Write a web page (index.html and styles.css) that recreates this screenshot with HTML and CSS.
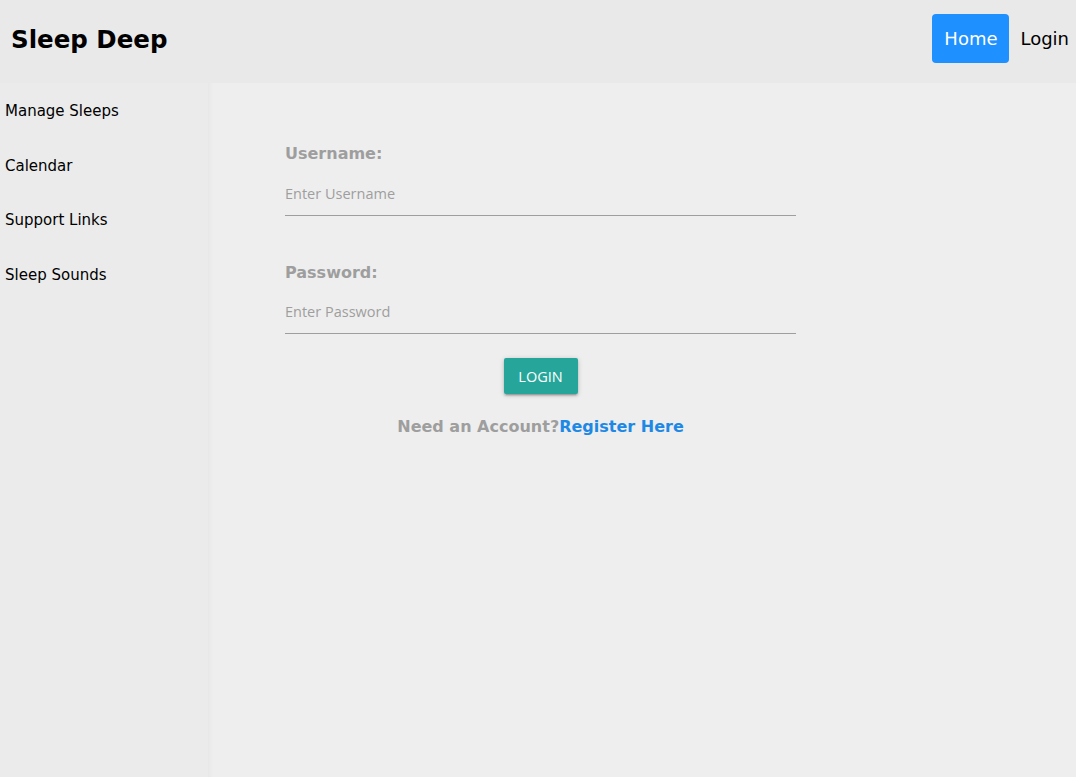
FILE: index.html
```html
<!DOCTYPE html>
<html>
<head>
<meta charset="utf-8">
<link rel="stylesheet" href="styles.css">
</head>
<body>
<header class="topbar">
  <h1 class="brand">Sleep Deep</h1>
  <nav class="topnav">
    <a class="topnav-link active" href="#">Home</a>
    <a class="topnav-link" href="#">Login</a>
  </nav>
</header>
<div class="layout">
  <aside class="sidebar">
    <a class="side-link" href="#">Manage Sleeps</a>
    <a class="side-link" href="#">Calendar</a>
    <a class="side-link" href="#">Support Links</a>
    <a class="side-link" href="#">Sleep Sounds</a>
  </aside>
  <main class="main">
    <form class="login-form">
      <label class="field-label">Username:</label>
      <input class="field-input" type="text" placeholder="Enter Username">
      <label class="field-label second">Password:</label>
      <input class="field-input pw" type="password" placeholder="Enter Password">
      <div class="actions">
        <button class="btn" type="button">LOGIN</button>
      </div>
      <p class="register">Need an Account?<a href="#">Register Here</a></p>
    </form>
  </main>
</div>
</body>
</html>
```
FILE: styles.css
```css
* { box-sizing: border-box; }
html, body { margin: 0; padding: 0; height: 100%; }
body {
  font-family: "DejaVu Sans", Verdana, sans-serif;
  background: #eeeeee;
  color: #000;
  display: flex;
  flex-direction: column;
}
.topbar {
  height: 83px;
  background: #e9e9e9;
  display: flex;
  align-items: center;
  justify-content: space-between;
  padding: 0 7px 0 11px;
  flex-shrink: 0;
}
.brand {
  margin: -5px 0 0;
  font-size: 24.5px;
  font-weight: bold;
}
.topnav { display: flex; align-items: center; gap: 11px; margin-top: -6px; }
.topnav-link {
  color: #000;
  text-decoration: none;
  font-size: 18px;
  height: 49px;
  line-height: 49px;
  border-radius: 4px;
}
.topnav-link.active {
  background: #1e90ff;
  color: #fff;
  width: 77px;
  text-align: center;
}
.layout { flex: 1; display: flex; }
.sidebar {
  width: 208px;
  background: #ebebeb;
  display: flex;
  flex-direction: column;
  padding-top: 17px;
}
.side-link {
  color: #000;
  text-decoration: none;
  font-size: 15px;
  padding: 0 5px;
  height: 54.5px;
  line-height: 22px;
}
.main {
  flex: 1;
  background: #eeeeee;
  box-shadow: inset 6px 0 6px -6px rgba(0,0,0,0.06);
  padding: 60px 0 0 77px;
}
.login-form { width: 511px; display: flex; flex-direction: column; }
.field-label {
  font-size: 16px;
  font-weight: bold;
  color: #9e9e9e;
  line-height: 22px;
}
.field-label.second { margin-top: 46px; }
.field-input {
  font-family: "Open Sans", sans-serif;
  font-size: 14.5px;
  color: #000;
  background: transparent;
  border: none;
  border-bottom: 1px solid #9e9e9e;
  outline: none;
  height: 45px;
  padding: 0;
  margin-top: 6px;
}
.field-input.pw { height: 44px; }
.field-input::placeholder { color: #9e9e9e; }
.actions { display: flex; justify-content: center; margin-top: 24px; }
.btn {
  font-family: "Open Sans", sans-serif;
  font-size: 14.5px;
  color: #fff;
  background: #26a69a;
  border: none;
  border-radius: 2px;
  width: 74px;
  height: 36px;
  padding: 0;
  box-shadow: 0 2px 2px 0 rgba(0,0,0,0.14), 0 3px 1px -2px rgba(0,0,0,0.12), 0 1px 5px 0 rgba(0,0,0,0.2);
}
.register {
  margin: 23px 0 0;
  text-align: center;
  font-size: 16px;
  font-weight: bold;
  color: #9e9e9e;
}
.register a { color: #1e88e5; text-decoration: none; }
```
